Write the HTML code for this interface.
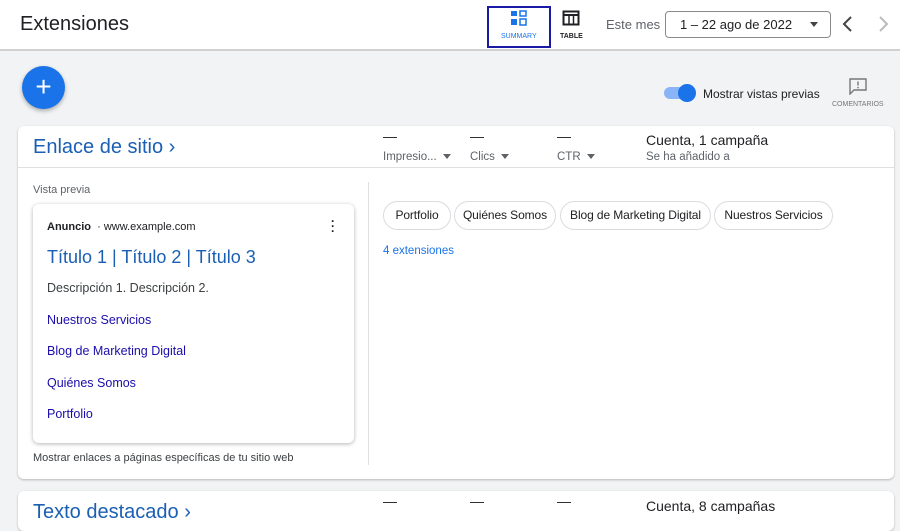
<!DOCTYPE html>
<html><head><meta charset="utf-8"><style>
*{margin:0;padding:0;box-sizing:border-box}
body{width:900px;height:518px;overflow:hidden;background:#f1f3f4;font-family:"Liberation Sans",Arial,sans-serif;color:#202124;position:relative}
.a{position:absolute}
.hdr{left:0;top:0;width:900px;height:51px;background:#fff;border-bottom:2px solid #d0d0d0}
.card{background:#fff;border-radius:6px;box-shadow:0 1px 2px rgba(0,0,0,.25)}
.chip{position:absolute;top:201px;height:29px;border:1px solid #dadce0;border-radius:15px;font-size:12px;line-height:27px;text-align:center;color:#202124;white-space:nowrap;letter-spacing:-.1px}
.lnk{position:absolute;left:47px;font-size:12.5px;color:#1a0dab}
.tri{display:inline-block;border-left:4px solid transparent;border-right:4px solid transparent;border-top:5px solid #5f6368;margin-left:6px;vertical-align:middle}
</style></head><body>
<div class="a hdr"></div>
<div class="a" style="left:20px;top:13px;font-size:20px">Extensiones</div>
<div class="a" style="left:487px;top:6px;width:64px;height:42px;border:2px solid #1a1aa6"></div>
<svg class="a" style="left:510px;top:10px" width="18" height="16" viewBox="0 0 18 16"><rect x="1" y="1" width="6" height="5" fill="#1a73e8"/><rect x="10" y="1" width="6" height="5" fill="none" stroke="#1a73e8" stroke-width="1.5"/><rect x="1" y="9" width="6" height="6" fill="#1a73e8"/><rect x="10" y="9" width="6" height="6" fill="none" stroke="#1a73e8" stroke-width="1.5"/></svg>
<div class="a" style="left:501px;top:33px;font-size:7px;color:#1a73e8">SUMMARY</div>
<svg class="a" style="left:562px;top:10px" width="18" height="16" viewBox="0 0 18 16"><rect x="1.5" y="1.5" width="15" height="13" fill="none" stroke="#202124" stroke-width="2"/><line x1="1" y1="5" x2="17" y2="5" stroke="#202124" stroke-width="2"/><line x1="7" y1="5" x2="7" y2="15" stroke="#202124" stroke-width="1.5"/><line x1="11.5" y1="5" x2="11.5" y2="15" stroke="#202124" stroke-width="1.5"/></svg>
<div class="a" style="left:560px;top:33px;font-size:7px;font-weight:bold">TABLE</div>
<div class="a" style="left:606px;top:17px;font-size:13px;color:#5f6368">Este mes</div>
<div class="a" style="left:665px;top:11px;width:166px;height:27px;border:1px solid #8a8a8a;border-radius:4px;font-size:13px;line-height:25px;padding-left:14px">1 – 22 ago de 2022<span class="tri" style="position:absolute;right:12px;top:10px;border-top-color:#444"></span></div>
<svg class="a" style="left:841px;top:15px" width="14" height="18" viewBox="0 0 14 18"><path d="M10 2L3 9l7 7" fill="none" stroke="#444" stroke-width="2"/></svg>
<svg class="a" style="left:876px;top:15px" width="14" height="18" viewBox="0 0 14 18"><path d="M4 2l7 7-7 7" fill="none" stroke="#bbb" stroke-width="2"/></svg>
<div class="a" style="left:22px;top:66px;width:43px;height:43px;border-radius:50%;background:#1a73e8;box-shadow:0 2px 4px rgba(0,0,0,.3);color:#fff;font-size:28px;text-align:center;line-height:41px">+</div>
<div class="a" style="left:664px;top:87px;width:30px;height:12px;border-radius:6px;background:#8ab4f8"></div>
<div class="a" style="left:678px;top:84px;width:18px;height:18px;border-radius:50%;background:#1a73e8"></div>
<div class="a" style="left:703px;top:87px;font-size:12px">Mostrar vistas previas</div>
<svg class="a" style="left:848px;top:77px" width="20" height="18" viewBox="0 0 20 18"><path d="M2 2h16v11H6l-4 4z" fill="none" stroke="#777" stroke-width="1.4"/><line x1="10" y1="4.5" x2="10" y2="8.5" stroke="#777" stroke-width="1.4"/><circle cx="10" cy="10.6" r=".8" fill="#777"/></svg>
<div class="a" style="left:832px;top:101px;font-size:7px;color:#777">COMENTARIOS</div>
<div class="a card" style="left:18px;top:126px;width:876px;height:353px"></div>
<div class="a" style="left:18px;top:167px;width:876px;height:1px;background:#e0e0e0"></div>
<div class="a" style="left:33px;top:136px;font-size:20px;color:#1a5fb4">Enlace de sitio ›</div>
<div class="a" style="left:383px;top:128px;font-size:14px">—</div><div class="a" style="left:470px;top:128px;font-size:14px">—</div><div class="a" style="left:557px;top:128px;font-size:14px">—</div>
<div class="a" style="left:383px;top:151px;font-size:11.5px;color:#5f6368">Impresio...<span class="tri"></span></div>
<div class="a" style="left:470px;top:151px;font-size:11.5px;color:#5f6368">Clics<span class="tri"></span></div>
<div class="a" style="left:557px;top:151px;font-size:11.5px;color:#5f6368">CTR<span class="tri"></span></div>
<div class="a" style="left:646px;top:132px;font-size:14px">Cuenta, 1 campaña</div>
<div class="a" style="left:646px;top:151px;font-size:11.5px;color:#5f6368">Se ha añadido a</div>
<div class="a" style="left:368px;top:182px;width:1px;height:283px;background:#e0e0e0"></div>
<div class="a" style="left:33px;top:184px;font-size:11px;color:#5f6368">Vista previa</div>
<div class="a card" style="left:33px;top:204px;width:321px;height:239px;box-shadow:0 1px 4px rgba(0,0,0,.3)"></div>
<div class="a" style="left:47px;top:221px;font-size:11px"><b>Anuncio</b> &nbsp;· www.example.com</div>
<div class="a" style="left:331px;top:219px;font-size:12px;font-weight:bold;line-height:5px">·<br>·<br>·</div>
<div class="a" style="left:47px;top:247px;font-size:18px;color:#1a5fb4">Título 1 | Título 2 | Título 3</div>
<div class="a" style="left:47px;top:281px;font-size:12.5px;color:#3c4043">Descripción 1. Descripción 2.</div>
<div class="lnk" style="top:313px">Nuestros Servicios</div>
<div class="lnk" style="top:344px">Blog de Marketing Digital</div>
<div class="lnk" style="top:376px">Quiénes Somos</div>
<div class="lnk" style="top:407px">Portfolio</div>
<div class="a" style="left:33px;top:452px;font-size:11px;color:#3c4043">Mostrar enlaces a páginas específicas de tu sitio web</div>
<div class="chip" style="left:383px;width:68px">Portfolio</div>
<div class="chip" style="left:454px;width:102px">Quiénes Somos</div>
<div class="chip" style="left:560px;width:151px">Blog de Marketing Digital</div>
<div class="chip" style="left:714px;width:119px">Nuestros Servicios</div>
<div class="a" style="left:383px;top:245px;font-size:11.5px;color:#1a73e8">4 extensiones</div>
<div class="a card" style="left:18px;top:491px;width:876px;height:40px"></div>
<div class="a" style="left:33px;top:501px;font-size:20px;color:#1a5fb4">Texto destacado ›</div>
<div class="a" style="left:383px;top:493px;font-size:14px">—</div><div class="a" style="left:470px;top:493px;font-size:14px">—</div><div class="a" style="left:557px;top:493px;font-size:14px">—</div>
<div class="a" style="left:646px;top:498px;font-size:14px">Cuenta, 8 campañas</div>
</body></html>
